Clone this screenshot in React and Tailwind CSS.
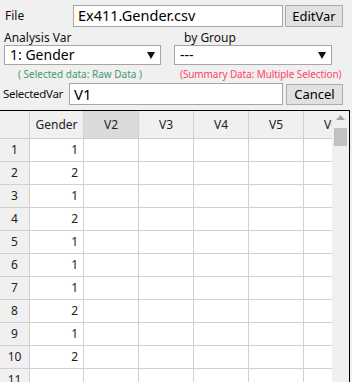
import React from "react";

const font = { fontFamily: '"Noto Sans", "Noto Sans CJK KR", sans-serif' };

const columns = [
  { label: "Gender", w: "w-[54px]" },
  { label: "V2", w: "w-[55px]", selected: true },
  { label: "V3", w: "w-[55px]" },
  { label: "V4", w: "w-[55px]" },
  { label: "V5", w: "w-[55px]" },
  { label: "V6", w: "w-[55px]" },
];

const genders = [1, 2, 1, 2, 1, 1, 1, 2, 1, 2, null];

const Caret = () => (
  <svg width="8" height="7" viewBox="0 0 8 7" className="shrink-0">
    <path d="M0 0 H8 L4 7 Z" fill="#111" />
  </svg>
);

const Select = ({ value, w }) => (
  <div className={`${w} h-[20px] bg-white border border-[#a6a6a6] flex items-center justify-between pl-[5px] pr-[5px]`}>
    <span className="text-[14px] leading-none text-black">{value}</span>
    <Caret />
  </div>
);

const Button = ({ children, w, h }) => (
  <button className={`${w} ${h} bg-[#e1e1e1] border border-[#adadad] text-[13px] leading-none text-black flex items-center justify-center`}>
    {children}
  </button>
);

const App = () => {
  return (
    <div className="w-[352px] h-[382px] bg-[#f0f0f0] overflow-hidden flex flex-col select-none" style={font}>
      {/* form area */}
      <div className="h-[110px] flex flex-col">
        <div className="flex items-center mt-[5px] h-[22px]">
          <span className="w-[73px] pl-[5px] text-[12px] text-[#111]">File</span>
          <div className="w-[210px] h-[22px] bg-white border border-[#a6a6a6] flex items-center pl-[4px] text-[14.5px] text-black">
            Ex411.Gender.csv
          </div>
          <div className="ml-[2px]">
            <Button w="w-[58px]" h="h-[22px]">EditVar</Button>
          </div>
        </div>

        <div className="flex h-[17px] items-end text-[12px] leading-none text-[#111]">
          <span className="pl-[4px] w-[184px]">Analysis Var</span>
          <span>by Group</span>
        </div>

        <div className="flex mt-[1px] h-[20px]">
          <div className="ml-[4px]">
            <Select value="1: Gender" w="w-[157px]" />
          </div>
          <div className="ml-[13px]">
            <Select value="---" w="w-[158px]" />
          </div>
        </div>

        <div className="flex h-[17px] items-center text-[10px] leading-none">
          <span className="pl-[18px] w-[180px] text-[#3f9a6b]">( Selected data: Raw Data )</span>
          <span className="text-[#ff4466] tracking-[-0.1px]">(Summary Data: Multiple Selection)</span>
        </div>

        <div className="flex items-center h-[22px] mt-[1px]">
          <span className="w-[69px] pl-[3px] text-[11.5px] tracking-[-0.3px] text-[#111] whitespace-nowrap">SelectedVar</span>
          <div className="w-[214px] h-[22px] bg-white border border-[#a6a6a6] flex items-center pl-[4px] text-[15px] text-black">
            V1
          </div>
          <div className="ml-[3px]">
            <Button w="w-[57px]" h="h-[21px]">Cancel</Button>
          </div>
        </div>
      </div>

      {/* grid */}
      <div className="flex-1 w-[350px] border-t border-r border-black flex overflow-hidden">
        <div className="w-[332px] bg-white overflow-hidden flex flex-col text-[12px] text-[#222]">
          <div className="flex h-[28px] shrink-0 bg-[#f0f0f0] border-b border-[#d0d0d0]">
            <div className="w-[30px] shrink-0 border-r border-[#d0d0d0]" />
            {columns.map((c) => (
              <div
                key={c.label}
                className={`${c.w} shrink-0 border-r border-[#d0d0d0] flex items-center justify-center ${c.selected ? "bg-[#dadada]" : ""}`}
              >
                {c.label}
              </div>
            ))}
          </div>
          {genders.map((g, i) => (
            <div key={i} className="flex h-[23px] shrink-0 border-b border-[#d0d0d0]">
              <div className="w-[30px] shrink-0 bg-[#f0f0f0] border-r border-[#d0d0d0] flex items-center justify-center">
                {i + 1}
              </div>
              {columns.map((c, j) => (
                <div
                  key={c.label}
                  className={`${c.w} shrink-0 border-r border-[#d0d0d0] flex items-center justify-end pr-[5px]`}
                >
                  {j === 0 && g !== null ? g : ""}
                </div>
              ))}
            </div>
          ))}
        </div>
        <div className="w-[17px] bg-[#f0f0f0] flex flex-col items-center pt-[4px]">
          <svg width="9" height="5" viewBox="0 0 9 5">
            <path d="M0 5 L4.5 0 L9 5 Z" fill="#a3a3a3" />
          </svg>
          <div className="w-[13px] h-[18px] bg-[#c1c1c1] mt-[8px]" />
        </div>
      </div>
    </div>
  );
};

export default App;
